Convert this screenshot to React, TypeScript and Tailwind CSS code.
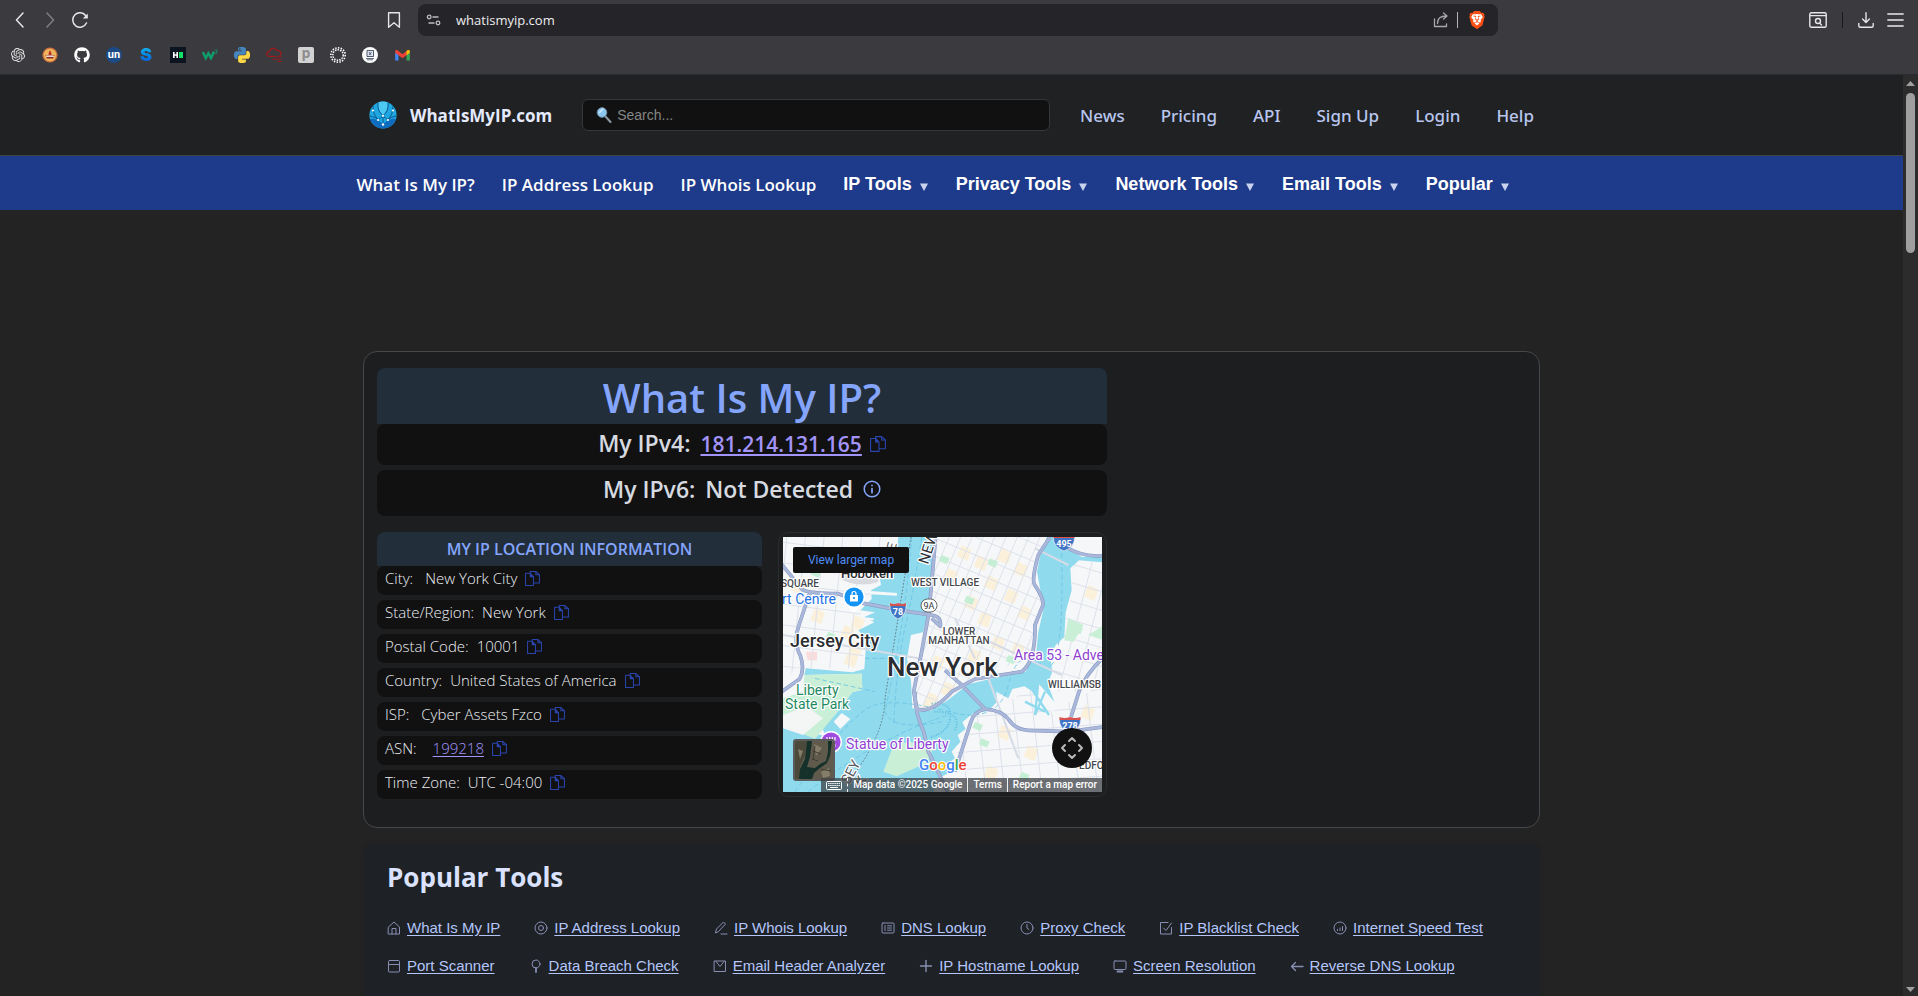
import React from "react";
import { FaGithub } from "react-icons/fa";
import { SiOpenai, SiBrave } from "react-icons/si";

type SvgProps = { className?: string; children?: React.ReactNode; box?: string };

function Line({ className = "", children, box = "0 0 16 16" }: SvgProps) {
  return (
    <svg viewBox={box} className={className} fill="none" stroke="currentColor" strokeLinecap="round" strokeLinejoin="round" aria-hidden="true">
      {children}
    </svg>
  );
}

/* ---------- browser chrome ---------- */

const pythonTop =
  "M14.25.18l.9.2.73.26.59.3.45.32.34.34.25.34.16.33.1.3.04.26.02.2-.01.13V8.5l-.05.63-.13.55-.21.46-.26.38-.3.31-.33.25-.35.19-.35.14-.33.1-.3.07-.26.04-.21.02H8.77l-.69.05-.59.14-.5.22-.41.27-.33.32-.27.35-.2.36-.15.37-.1.35-.07.32-.04.27-.02.21v3.06H3.17l-.21-.03-.28-.07-.32-.12-.35-.18-.36-.26-.36-.36-.35-.46-.32-.59-.28-.73-.21-.88-.14-1.05-.05-1.23.06-1.22.16-1.04.24-.87.32-.71.36-.57.4-.44.42-.33.42-.24.4-.16.36-.1.32-.05.24-.01h.16l.06.01h8.16v-.83H6.18l-.01-2.75-.02-.37.05-.34.11-.31.17-.28.25-.26.31-.23.38-.2.44-.18.51-.15.58-.12.64-.1.71-.06.77-.04.84-.02 1.27.05zm-6.3 1.98l-.23.33-.08.41.08.41.23.34.33.22.41.09.41-.09.33-.22.23-.34.08-.41-.08-.41-.23-.33-.33-.22-.41-.09-.41.09z";
const pythonBottom =
  "M21.04 6.11l.28.06.32.12.35.18.36.27.36.35.35.47.32.59.28.73.21.88.14 1.04.05 1.23-.06 1.23-.16 1.04-.24.86-.32.71-.36.57-.4.45-.42.33-.42.24-.4.16-.36.09-.32.05-.24.02-.16-.01h-8.22v.82h5.84l.01 2.76.02.36-.05.34-.11.31-.17.29-.25.25-.31.24-.38.2-.44.17-.51.15-.58.13-.64.09-.71.07-.77.04-.84.01-1.27-.04-1.07-.14-.9-.2-.73-.25-.59-.3-.45-.33-.34-.34-.25-.34-.16-.33-.1-.3-.04-.25-.02-.2.01-.13v-5.34l.05-.64.13-.54.21-.46.26-.38.3-.32.33-.24.35-.2.35-.14.33-.1.3-.06.26-.04.21-.02.13-.01h5.84l.69-.05.59-.14.5-.21.41-.28.33-.32.27-.35.2-.36.15-.36.1-.35.07-.32.04-.28.02-.21V6.07h2.09l.14.01z";

const bookmarks: { name: string; icon: React.ReactNode }[] = [
  { name: "ChatGPT", icon: <SiOpenai className="size-[14px] text-[#e4e4e4]" /> },
  {
    name: "Temple",
    icon: (
      <svg viewBox="0 0 16 16" className="size-4">
        <circle cx="8" cy="8" r="7.6" fill="#c9703c" />
        <circle cx="8" cy="8" r="6.3" fill="#efb45c" />
        <path d="M3.2 8.2h9.600l-1.800 3.400H5z" fill="#8a2a23" />
        <path d="M8 3l1.400 3v2H6.600V6z" fill="#b5322b" />
        <path d="M4 9.200h8" stroke="#fff" strokeWidth="1.200" />
      </svg>
    ),
  },
  { name: "GitHub", icon: <FaGithub className="size-4 text-white" /> },
  {
    name: "UN",
    icon: (
      <span className="flex size-4 items-center justify-center rounded-full bg-[#1c4a86] pb-px font-['Roboto',sans-serif] text-[11px] leading-none font-bold text-white">
        un
      </span>
    ),
  },
  {
    name: "S",
    icon: (
      <span className="bg-gradient-to-b from-[#19b4f0] to-[#1257d8] bg-clip-text font-['Inter',sans-serif] text-[18px] leading-4 font-black text-transparent">S</span>
    ),
  },
  {
    name: "HackerRank",
    icon: (
      <svg viewBox="0 0 16 16" className="size-4">
        <rect width="16" height="16" fill="#0c1420" />
        <path d="M3.800 5v6M7.200 5v6M3.800 8h3.400" stroke="#fff" strokeWidth="1.600" fill="none" />
        <rect x="9" y="5" width="4" height="6" fill="#12e068" />
      </svg>
    ),
  },
  {
    name: "W3Schools",
    icon: (
      <svg viewBox="0 0 16 16" className="size-4" fill="none" stroke="#0f9d6a">
        <path d="M.8 5l3 6L6.400 6.400 9 11l3-6.400" strokeWidth="2.500" />
        <path d="M13 3h2.200L14 4.600q1.600.2 1 1.400t-2 .3" strokeWidth=".8" />
      </svg>
    ),
  },
  {
    name: "Python",
    icon: (
      <svg viewBox="0 0 24 24" className="size-4">
        <path d={pythonTop} fill="#4685bd" />
        <path d={pythonBottom} fill="#ffd845" />
      </svg>
    ),
  },
  {
    name: "Cloud",
    icon: (
      <Line className="size-4 text-[#a31919]">
        <path d="M8.500 9.300H3.200a2.500 2.500 0 0 1 .3-5A4 4 0 0 1 11 3.800a2.800 2.800 0 0 1 3 4.600" strokeWidth="1.200" />
        <path d="M10 9.800h5M7 12.200h4M12.500 12.200h1.500M12 14.500h3.500" strokeWidth="1" />
      </Line>
    ),
  },
  {
    name: "P",
    icon: (
      <span className="flex size-4 items-center justify-center rounded-[2px] bg-[#d2d2d2] pb-1 font-['Open_Sans',sans-serif] text-[14px] leading-none font-bold text-[#8d8d8d]">p</span>
    ),
  },
  {
    name: "Ring",
    icon: (
      <svg viewBox="0 0 16 16" className="size-4" fill="none" stroke="#ffffff">
        <circle cx="8" cy="8" r="7.200" strokeDasharray="1.500 1.300" strokeWidth="1.600" />
        <circle cx="8" cy="8" r="5.200" strokeDasharray="1.500 1.100" strokeWidth="1.500" />
      </svg>
    ),
  },
  {
    name: "Computer",
    icon: (
      <svg viewBox="0 0 16 16" className="size-4">
        <circle cx="8" cy="8" r="8" fill="#fbfbfb" />
        <path d="M5 3.500h6.500v6H5z" fill="#dfe6ef" stroke="#24324a" strokeWidth=".8" />
        <path d="M7 5l2 3M9.500 5L7 8M4 11.500h8M5 12.800h6" stroke="#24324a" strokeWidth=".7" />
      </svg>
    ),
  },
  {
    name: "Gmail",
    icon: (
      <svg viewBox="0 0 16 12" className="h-[11px] w-[15px]">
        <path d="M0 2v9.500h3.600V4.500z" fill="#4285f4" />
        <path d="M16 2v9.500h-3.600V4.500z" fill="#34a853" />
        <path d="M0 3V1.600A1.500 1.500 0 0 1 2.600.4L8 4.500 13.400.4v4.500L8 9 0 3z" fill="#ea4335" />
        <path d="M12.400 1.200V5.600L16 3V1.600A1.500 1.500 0 0 0 13.400.4z" fill="#fbbc04" />
      </svg>
    ),
  },
];

function BrowserChrome() {
  return (
    <div className="shrink-0 border-b border-[#2c2b2f] bg-[#3b3a3f] text-[#e6e6e8]">
      <div className="flex h-10 items-center">
        <div className="flex flex-1 items-center pl-3">
          <button aria-label="Back" className="flex size-4 items-center justify-center">
            <Line className="size-4"><path d="M11 1L4.500 8l6.500 7" strokeWidth="1.5" /></Line>
          </button>
          <button aria-label="Forward" className="ml-[14px] flex size-4 items-center justify-center text-[#7f7e83]">
            <Line className="size-4"><path d="M5 1l6.500 7L5 15" strokeWidth="1.5" /></Line>
          </button>
          <button aria-label="Reload" className="ml-[14px] flex size-4 items-center justify-center">
            <svg viewBox="0 0 16 16" className="size-4" fill="none" stroke="currentColor" strokeWidth="1.5" aria-hidden="true">
              <path d="M14.500 11A7.200 7.200 0 1 1 14 4" strokeLinecap="round" />
              <path d="M15.800 1.500v5h-5z" fill="currentColor" stroke="none" />
            </svg>
          </button>
          <button aria-label="Bookmark this page" className="mr-4 ml-auto">
            <Line className="size-4"><path d="M2.600 .8h10.800v14.400L8 10.700l-5.400 4.500z" strokeWidth="1.400" /></Line>
          </button>
        </div>
        <div className="flex h-8 w-[1080px] items-center rounded-lg bg-[#252429] px-2">
          <Line className="size-4 text-[#bfbfc2]">
            <circle cx="3.200" cy="5" r="1.800" strokeWidth="1.300" />
            <circle cx="12" cy="11" r="1.800" strokeWidth="1.300" />
            <path d="M7 5h5M3 11h5" strokeWidth="1.400" />
          </Line>
          <input aria-label="Address" defaultValue="whatismyip.com" className="ml-[14px] min-w-0 flex-1 bg-transparent pt-px font-['Open_Sans',sans-serif] text-[13px] text-[#ededee] outline-none" />
          <button aria-label="Share">
            <Line className="size-4 text-[#a9a9ac]">
              <path d="M1.500 7v7.500h12V12M4.500 11.500c0-5 3-7.500 9-7.500M10.500 1l3.500 3-3.500 3" strokeWidth="1.300" />
            </Line>
          </button>
          <span className="mx-2 h-4 w-px bg-[#b5b5b8]" />
          <button aria-label="Brave Shields" className="mr-1 ml-[2px]">
            <svg viewBox="0 0 24 24" className="size-[18px]" aria-hidden="true">
              <path d="M6 4h12l2 4-2 9-6 5-6-5L4 8z" fill="#fff" />
              <SiBrave size={24} color="#fb4f14" />
            </svg>
          </button>
        </div>
        <div className="flex flex-1 items-center justify-end pr-[14px]">
          <button aria-label="Search tabs">
            <Line className="h-4 w-[18px]" box="0 0 18 16">
              <rect x=".8" y=".8" width="16.400" height="14.400" rx="1.500" strokeWidth="1.400" />
              <path d="M1 3.600h16M11 11.500l1.500 1.400" strokeWidth="1.400" />
              <circle cx="9" cy="9" r="2.500" strokeWidth="1.400" />
            </Line>
          </button>
          <span className="mx-[15px] h-4 w-px bg-[#19191b]" />
          <button aria-label="Downloads">
            <Line className="size-4"><path d="M8 .8v9.500M4.600 7L8 10.400 11.400 7M.8 11.500v2.200q0 1.500 1.500 1.500h11.400q1.500 0 1.500-1.500v-2.200" strokeWidth="1.400" /></Line>
          </button>
          <button aria-label="Menu" className="ml-[13px] text-[#bdbdbf]">
            <Line className="h-4 w-[17px]" box="0 0 17 16"><path d="M1 2h15M1 8h15M1 14h15" strokeWidth="1.800" /></Line>
          </button>
        </div>
      </div>
      <div className="flex h-[34px] items-start gap-4 px-[10px] pt-[7px]">
        {bookmarks.map((b) => (
          <a key={b.name} href="#" aria-label={b.name} className="flex size-4 items-center justify-center">
            {b.icon}
          </a>
        ))}
      </div>
    </div>
  );
}

/* ---------- site header ---------- */

function Logo() {
  return (
    <svg viewBox="0 0 28 28" className="size-7" aria-hidden="true">
      <circle cx="14" cy="14" r="13.600" fill="#1ea7e0" />
      <path d="M1 18q6-1 13 5 7-6 13-5-3 9-13 9.600Q4 27 1 18z" fill="#0f6bbd" />
      <path d="M9 1.500Q14-.5 19 1.500 19 10 14 14 9 10 9 1.500z" fill="#4cc9f2" />
      <path d="M9 1.500q-1 9 5 13 6-4 5-13M4 5q0 9 5 13M24 5q0 9-5 13M14 14v9M9 19l5-4 5 4M1 15q6 1 8 4M27 15q-6 1-8 4" fill="none" stroke="#0b4f88" strokeWidth=".9" />
      <g fill="#fff">
        <circle cx="4" cy="9.500" r="1.100" /><circle cx="24" cy="9.500" r="1.100" /><circle cx="14" cy="14.800" r="1.100" />
        <circle cx="9" cy="19" r="1.100" /><circle cx="19" cy="19" r="1.100" /><circle cx="14" cy="23.500" r="1.200" />
      </g>
    </svg>
  );
}

const topLinks = ["News", "Pricing", "API", "Sign Up", "Login", "Help"];
const plainTabs = ["What Is My IP?", "IP Address Lookup", "IP Whois Lookup"];
const menuTabs = ["IP Tools", "Privacy Tools", "Network Tools", "Email Tools", "Popular"];

function SiteHeader() {
  return (
    <header>
      <div className="border-b border-[#414346] bg-[#202122]">
        <div className="mx-auto flex h-20 max-w-[1165px] items-center">
          <a href="#" className="flex items-center gap-[13px] font-['Open_Sans',sans-serif] text-[17px] font-bold text-[#e4eafc]">
            <Logo />
            <span className="pt-px">WhatIsMyIP.com</span>
          </a>
          <label className="mx-[30px] flex h-8 flex-1 items-center gap-1 rounded-md border border-[#35373a] bg-[#111111] pl-3">
            <svg viewBox="0 0 18 18" className="size-[18px]" aria-hidden="true">
              <path d="M10 10l5.500 6" stroke="#15181b" strokeWidth="3.600" strokeLinecap="round" />
              <path d="M10.500 10.500l5 5.500" stroke="#8d979f" strokeWidth="2" strokeLinecap="round" />
              <circle cx="7" cy="6.500" r="4.800" fill="#8cc7f2" stroke="#6f8ea6" strokeWidth="1" />
              <path d="M4.500 6.500l3.500-3.500" stroke="#d5ecfb" strokeWidth="1.400" strokeLinecap="round" />
            </svg>
            <input type="text" aria-label="Search" placeholder="Search..." className="min-w-0 flex-1 bg-transparent font-['Liberation_Sans',Arial,sans-serif] text-[14px] text-gray-200 outline-none placeholder:text-[#858585]" />
          </label>
          <nav className="flex gap-9 pt-px font-['Noto_Sans',sans-serif] text-[17px] font-medium text-[#b9c6ee]">
            {topLinks.map((t) => (
              <a key={t} href="#">{t}</a>
            ))}
          </nav>
        </div>
      </div>
      <nav className="bg-[#1e3a8a] text-white">
        <div className="mx-auto flex h-[54px] max-w-[1190px] items-center gap-[27px] pt-[3px]">
          {plainTabs.map((t) => (
            <a key={t} href="#" className="font-['Open_Sans',sans-serif] text-[17px] font-semibold whitespace-nowrap">{t}</a>
          ))}
          <div className="flex items-center gap-7">
            {menuTabs.map((t) => (
              <button key={t} className="flex items-center gap-2 font-['Liberation_Sans',Arial,sans-serif] text-[18px] font-bold whitespace-nowrap">
                {t}
                <svg viewBox="0 0 8 8" className="mt-1 size-2" aria-hidden="true"><path d="M0 .5h8L4 8z" fill="#c9d3ee" /></svg>
              </button>
            ))}
          </div>
        </div>
      </nav>
    </header>
  );
}

/* ---------- ip card ---------- */

function CopyIcon({ className }: { className: string }) {
  return (
    <svg viewBox="0 0 16 16" className={className} fill="none" stroke="#2b45ae" strokeWidth="1.100" strokeLinejoin="round" aria-hidden="true">
      <path d="M.6 2.500h5L9 6v9.400H.6z" />
      <path d="M5.600 2.500V6H9" fill="#2b45ae" />
      <path d="M5.600 2V.6h6L15.400 4v8.800H9" />
      <path d="M11.600.6V4h3.800" />
    </svg>
  );
}

const facts: { label: string; value: string; gap: string; link?: boolean }[] = [
  { label: "City:", value: "New York City", gap: "gap-3" },
  { label: "State/Region:", value: "New York", gap: "gap-2" },
  { label: "Postal Code:", value: "10001", gap: "gap-2" },
  { label: "Country:", value: "United States of America", gap: "gap-2" },
  { label: "ISP:", value: "Cyber Assets Fzco", gap: "gap-3" },
  { label: "ASN:", value: "199218", gap: "gap-4", link: true },
  { label: "Time Zone:", value: "UTC -04:00", gap: "gap-2" },
];

const water =
  "M370 36L366 84 312 146 318 180 288 196 290 222 256 256 300 262 268 276 298 292 250 316 268 336 272 376 268 432 232 442 92 430 88 450 260 446 262 494 232 502 180 570 140 604 152 634 20 600 20 810 474 810 488 762 520 744 512 722 540 700 530 680 556 650 548 630 572 612 562 592 592 566 640 558 666 530 664 500 700 520 712 492 748 484 790 510 786 470 812 500 838 530 818 476 832 440 826 396 842 360 868 336 872 262 890 196 886 130 912 106 981 112 981 92 920 96 866 60 850 30 818 30 796 90 786 140 806 250 790 320 784 380 752 440 660 458 580 478 520 524 470 556 430 560 412 548 408 470 396 400 408 330 444 322 462 250 470 150 476 36z";

const highways = [
  "M482 36L472 150 462 262 440 380 416 500 426 552Q470 566 530 500L600 462 740 440Q782 410 780 300L804 240Q806 218 778 178 770 160 790 90L825 36",
  "M20 118L82 194Q104 206 190 206L270 236 400 260 470 270Q500 274 496 304L470 280",
  "M112 204Q100 200 92 240L72 300Q54 350 76 392 90 432 74 462L20 500",
  "M510 436L560 480 630 552Q680 556 700 582 720 614 760 616L880 620 986 606",
  "M630 552Q596 560 588 590L556 690 540 740",
  "M420 500Q418 560 446 620L460 680 494 750 520 806",
  "M986 396Q930 450 912 500L888 576",
  "M850 40L870 64Q920 98 986 92",
];

function lines(n: number, f: (i: number) => string) {
  return Array.from({ length: n }, (_, i) => f(i)).join("");
}

const manhattanStreets =
  lines(12, (i) => `M${530 + i * 34} 20L${300 + i * 34} 560`) + lines(13, (i) => `M380 ${i * 54 - 110}l480 200`);
const jerseyStreets = lines(7, (i) => `M${-20 + i * 56} 30l-50 500`) + lines(7, (i) => `M10 ${i * 62 + 50}l320 40`);
const brooklynStreets = lines(11, (i) => `M${540 + i * 56} 480l40 340`) + lines(8, (i) => `M480 ${i * 52 + 480}l520-40`);
const queensStreets = lines(6, (i) => `M${800 + i * 50} 500l110-420`) + lines(7, (i) => `M800 ${i * 56 + 90}l200 60`);

const sandBlocks: [number, number][] = [
  [560, 60], [610, 90], [680, 70], [730, 110], [520, 130], [640, 150], [580, 210], [700, 190], [740, 240], [620, 260],
  [540, 300], [660, 330], [590, 370], [720, 350], [480, 390], [510, 470], [460, 500], [200, 80], [240, 270], [120, 250],
  [220, 380], [680, 600], [760, 660], [880, 680], [640, 720], [930, 540], [940, 180], [60, 160], [235, 345], [210, 300], [450, 530],
];
const parkBlocks: [number, number][] = [
  [500, 90], [575, 212], [645, 100], [700, 390], [860, 700], [620, 640], [900, 300], [160, 320], [600, 590], [115, 130], [740, 740],
];

function Shield({ x, y, label }: { x: number; y: number; label: string }) {
  const w = label.length * 2.5 + 3;
  return (
    <g>
      <path d={`M${x - w} ${y - 6}q${w} 3 ${2 * w} 0Q${x + w + 1} ${y + 5} ${x} ${y + 9} ${x - w - 1} ${y + 5} ${x - w} ${y - 6}z`} fill="#3f74c4" stroke="#fff" strokeWidth=".6" />
      <path d={`M${x - w} ${y - 7}q${w / 2} 2 ${w} 0 ${w / 2} 2 ${w} 0v3H${x - w}z`} fill="#d9534f" />
      <text x={x} y={y + 5} textAnchor="middle" fontSize="9" fontWeight="700" fill="#fff">{label}</text>
    </g>
  );
}

function MapDrawing() {
  return (
    <svg viewBox="0 0 319 255" className="block h-full w-full" preserveAspectRatio="xMidYMid slice" fontFamily="Roboto, sans-serif" role="img" aria-label="Map of New York">
      <defs>
        <clipPath id="land-nj"><path d="M0 0H360L310 160 256 260 268 430 60 430 0 520z" /></clipPath>
        <clipPath id="land-mn"><path d="M482 30H815L780 160 800 240 770 400 590 460 470 555 420 545 430 420z" /></clipPath>
        <clipPath id="land-bk"><path d="M660 560L760 490 830 560 981 480V810H480L540 700 590 570z" /></clipPath>
        <clipPath id="land-qn"><path d="M981 110L900 110 880 260 840 370 830 500 981 500z" /></clipPath>
      </defs>
      <rect width="319" height="255" fill="#f6f7f9" />
      <g transform="scale(.33333) translate(-24 -36)">
        <g fill="#fbf0d9">
          {sandBlocks.map(([x, y]) => (
            <path key={`${x}-${y}`} d={`M${x} ${y}l30 14-12 34-32-14z`} />
          ))}
        </g>
        <path d="M92 380h34v26H98z" fill="#fbdcdc" />
        <g stroke="#dde1ea" strokeWidth="3" fill="none">
          <path d={jerseyStreets} clipPath="url(#land-nj)" />
          <path d={manhattanStreets} clipPath="url(#land-mn)" />
          <path d={brooklynStreets} clipPath="url(#land-bk)" />
          <path d={queensStreets} clipPath="url(#land-qn)" />
        </g>
        <g fill="#c5efd4">
          {parkBlocks.map(([x, y]) => (
            <path key={`${x}-${y}`} d={`M${x} ${y}l24 10-8 18-24-10z`} />
          ))}
        </g>
        <path d={water} fill="#90daee" />
        <g fill="#f6f7f9">
          <path d="M286 198l80 6v8l-80-4zM262 276l34 4v6l-34-2zM240 332l30 6-4 10-28-4z" />
          <path d="M408 330l36 4v8l-36-4zM404 360l32 4v8l-32-4z" />
        </g>
        <path d="M88 450l172-4 2 48-30 8-52 68-60 72-96-40V520l60-20z" fill="#c9f0d6" />
        <path d="M24 570l70-26 50 36-60 50-60-20z" fill="#f3f6f5" />
        <path d="M176 590l24-26 26 18-30 30z" fill="#f6f7f9" />
        <path d="M325 740l30-78 50-12 70 20-20 44-90 40z" fill="#c9f0d6" />
        <path d="M880 280l46 20-30 50-28-4zM940 330l41-26v40z" fill="#c9f0d6" />
        <g stroke="#69c3e2" strokeWidth="2.500" fill="none" strokeDasharray="14 8">
          <path d="M410 36Q396 200 380 300T330 560Q350 620 500 590" />
          <path d="M440 36Q420 180 392 300T356 600" />
          <path d="M60 800Q230 560 300 540T520 560 700 480 800 420 860 60" />
          <path d="M270 400h100M120 460L300 500M100 800Q300 640 520 570" />
        </g>
        <path d="M470 536q60-6 56 40t-60 60M478 560q90 0 60 60" stroke="#5dbfe0" strokeWidth="6" strokeDasharray="3 5" fill="none" />
        <path d="M408 36L366 300 330 520Q330 600 270 700L230 760" stroke="#546a78" strokeWidth="2.500" strokeDasharray="5 5" fill="none" />
        <path d="M540 280L600 400M600 330L860 450M640 460L730 700M780 70L880 120M24 330L430 400" stroke="#d6dbe6" strokeWidth="6" fill="none" />
        <g fill="none" strokeLinejoin="round">
          {highways.map((d) => <path key={d} d={d} stroke="#8797c0" strokeWidth="11" />)}
          {highways.map((d) => <path key={d} d={d} stroke="#a9b7da" strokeWidth="8" />)}
        </g>
        <path d="M200 150h110v20q-50 20-110-6z" fill="#d8dae0" />
        <path d="M762 480l60 90M790 470l-10 100M810 500l-30 70M750 530l60 30" stroke="#90daee" strokeWidth="7" />
      </g>
      <g stroke="#fff" strokeWidth="2.400" paintOrder="stroke" strokeLinejoin="round" fill="#2b2d31">
        <g fontSize="10" fontWeight="500" fill="#44474c">
          <text x="-2" y="50">SQUARE</text>
          <text x="128" y="49">WEST VILLAGE</text>
          <text x="176" y="98" textAnchor="middle">LOWER</text>
          <text x="176" y="107" textAnchor="middle">MANHATTAN</text>
          <text x="265" y="151">WILLIAMSB</text>
          <text x="296" y="232">EDFO</text>
        </g>
        <text x="58" y="41" fontSize="13" fontWeight="500">Hoboken</text>
        <text x="7" y="110" fontSize="18" fontWeight="500">Jersey City</text>
        <text x="104" y="139" fontSize="26" fontWeight="500">New York</text>
        <text x="-1" y="67" fontSize="14" fill="#1f74e8">rt Centre</text>
        <text x="13" y="158" fontSize="14" fill="#1e8a5f">Liberty</text>
        <text x="2" y="172" fontSize="14" fill="#1e8a5f">State Park</text>
        <text x="231" y="123" fontSize="14" fill="#8d3fd1">Area 53 - Adve</text>
        <text x="63" y="212" fontSize="14" fill="#8d3fd1">Statue of Liberty</text>
        <text x="112" y="14" fontSize="13" fill="#55585e" transform="rotate(-74 112 14)">E</text>
        <text x="145" y="28" fontSize="15" transform="rotate(-72 145 28)">NEW</text>
        <text x="66" y="248" fontSize="14" fill="#55585e" transform="rotate(-62 66 248)">SEY</text>
        <text x="80" y="250" fontSize="14" fill="#55585e" transform="rotate(-62 80 250)">K</text>
      </g>
      <g>
        <circle cx="71" cy="60" r="11" fill="#fff" />
        <path d="M63 67l8 9 8-9z" fill="#fff" />
        <circle cx="71" cy="60" r="9.600" fill="#1394f5" />
        <path d="M67 58h8v6.500h-8z" fill="#fff" />
        <path d="M69 58v-1.500a2 2 0 0 1 4 0V58" fill="none" stroke="#fff" strokeWidth="1.200" />
        <circle cx="71" cy="61" r="1.100" fill="#1394f5" />
      </g>
      <g>
        <circle cx="48" cy="205" r="11" fill="#fff" />
        <circle cx="48" cy="205" r="9.600" fill="#a04be0" />
        <path d="M44 200v3h8v-3M46.700 200v3M49.300 200v3M45 204h6l1 5h-8z" stroke="#fff" strokeWidth="1.200" fill="none" />
      </g>
      <rect x="138" y="62" width="16" height="13" rx="6.500" fill="#fff" stroke="#444" strokeWidth=".8" />
      <text x="146" y="72" textAnchor="middle" fontSize="9" fill="#333">9A</text>
      <Shield x={115} y={73} label="78" />
      <Shield x={281} y={5} label="495" />
      <Shield x={287} y={187} label="278" />
      <text x="136" y="233" fontSize="15" fontWeight="500" stroke="#fff" strokeWidth="2" paintOrder="stroke">
        <tspan fill="#4285f4">G</tspan><tspan fill="#ea4335">o</tspan><tspan fill="#fbbc04">o</tspan><tspan fill="#4285f4">g</tspan><tspan fill="#34a853">l</tspan><tspan fill="#ea4335">e</tspan>
      </text>
    </svg>
  );
}

function MapPanel() {
  return (
    <div className="h-[265px] flex-1 rounded-[10px] border border-[#2b2c2f] p-1">
      <div className="relative h-full overflow-hidden">
        <MapDrawing />
        <a href="#" className="absolute top-[10px] left-[10px] flex h-[26px] w-[116px] items-center justify-center rounded-[2px] bg-[#111111] font-['Roboto',sans-serif] text-[12px] text-[#4f8df5]">
          View larger map
        </a>
        <button aria-label="Satellite view" className="absolute bottom-[11px] left-[10px] size-[42px] overflow-hidden rounded-[3px] border-2 border-[#5b5b5b]">
          <svg viewBox="0 0 38 38" className="size-full" aria-hidden="true">
            <rect width="38" height="38" fill="#5f5a4b" />
            <path d="M0 0h12l-2 14L5 26v12H0z" fill="#4b4a3a" />
            <path d="M12 0h5l-2 16-3 10 8 1 5-4 6-3 2-9V0h4l-2 15-3 7-7 5-6 5-2 6H4l1-10 5-10z" fill="#16302a" />
            <path d="M19 3l8 4-6 8zM26 31l8-4 1 8-7 2zM3 8l5 2-3 8z" fill="#857d69" />
            <path d="M18 10l8 3M17 18l6 2M26 28l10 2M20 5l-2 14" stroke="#3f3c30" strokeWidth="1" />
          </svg>
        </button>
        <button aria-label="Map camera controls" className="absolute right-[10px] bottom-6 flex size-10 items-center justify-center rounded-full bg-[#111111] text-[#b9b9b9]">
          <Line className="size-6" box="0 0 24 24">
            <path d="M9 5l3-3 3 3M9 19l3 3 3-3M5 9l-3 3 3 3M19 9l3 3-3 3" strokeWidth="2" />
          </Line>
        </button>
        <div className="absolute right-0 bottom-0 flex h-[14px] items-center bg-[#3e4145]/75 font-['Roboto',sans-serif] text-[10px] leading-none font-medium whitespace-nowrap text-white">
          <button aria-label="Keyboard shortcuts" className="px-[5px]">
            <Line className="h-[9px] w-4" box="0 0 16 9">
              <rect x=".5" y=".5" width="15" height="8" rx="1" strokeWidth="1" />
              <path d="M2.500 2.500h11M2.500 4.500h11" strokeWidth="1" strokeDasharray=".6 1.500" />
              <path d="M4.500 6.500h7" strokeWidth="1" />
            </Line>
          </button>
          <span className="flex h-full items-center border-l border-dashed border-white/90 px-[5px]">Map data ©2025 Google</span>
          <a href="#" className="flex h-full items-center border-l border-white/90 px-[5px]">Terms</a>
          <a href="#" className="flex h-full items-center border-l border-white/90 px-[5px]">Report a map error</a>
        </div>
      </div>
    </div>
  );
}

function IpCard() {
  return (
    <section className="rounded-[14px] border border-[#45474a] bg-[#1d1e20] px-[13px] pt-4 pb-7 font-['Open_Sans',sans-serif]">
      <div className="w-[730px]">
        <h1 className="flex h-14 items-center justify-center rounded-t-lg bg-[#232e3b] pt-[3px] text-[40px] leading-none font-semibold text-[#84a5fb]">What Is My IP?</h1>
        <div className="flex h-[41px] items-center justify-center gap-2 rounded-lg bg-[#111111] pb-[2px] text-[#d6dae0]">
          <span className="flex items-baseline gap-[10px] font-semibold">
            <span className="text-[23px] leading-8">My IPv4:</span>
            <a href="#" className="text-[21px] leading-8 text-[#a394fb] underline decoration-2 underline-offset-2">181.214.131.165</a>
          </span>
          <button aria-label="Copy IPv4"><CopyIcon className="size-4" /></button>
        </div>
        <div className="mt-[5px] flex h-[46px] items-center justify-center gap-[10px] rounded-lg bg-[#111111] pb-2 text-[23px] leading-8 font-semibold text-[#d6dae0]">
          <span>My IPv6:</span>
          <span>Not Detected</span>
          <button aria-label="About IPv6" className="text-[#84a5fb]">
            <Line className="size-[18px]" box="0 0 18 18">
              <circle cx="9" cy="9" r="7.800" strokeWidth="1.500" />
              <path d="M9 8.500v4.200M9 5.400v.2" strokeWidth="1.700" />
            </Line>
          </button>
        </div>
        <div className="mt-4 flex items-start gap-4">
          <div className="w-[385px]">
            <h2 className="flex h-[34px] items-center justify-center rounded-t-lg bg-[#232e3b] text-[16px] font-semibold text-[#84a5fb]">MY IP LOCATION INFORMATION</h2>
            <ul className="flex flex-col gap-[5px]">
              {facts.map((f) => (
                <li key={f.label} className="flex h-[29px] items-center rounded-lg bg-[#111111] pb-1 pl-2 text-[15px] font-light text-[#eef0f4]">
                  <span className={`flex ${f.gap}`}>
                    <span>{f.label}</span>
                    {f.link ? <a href="#" className="text-[#a394fb] underline underline-offset-2">{f.value}</a> : <span>{f.value}</span>}
                  </span>
                  <button aria-label={`Copy ${f.value}`} className="ml-2"><CopyIcon className="size-[15px]" /></button>
                </li>
              ))}
            </ul>
          </div>
          <MapPanel />
        </div>
      </div>
    </section>
  );
}

/* ---------- popular tools ---------- */

const toolRows: { name: string; icon: React.ReactNode }[][] = [
  [
    { name: "What Is My IP", icon: <path d="M1.500 6L7 1l5.500 5v7h-11zM5 13V7.500h4V13" /> },
    { name: "IP Address Lookup", icon: <><circle cx="7" cy="7" r="6" /><circle cx="7" cy="7" r="2.500" /></> },
    { name: "IP Whois Lookup", icon: <path d="M1.500 11.500l1-3.500L9.500 1l2 2-7 7.500zM7 13h6" /> },
    { name: "DNS Lookup", icon: <><rect x="1" y="2" width="12" height="10" rx="1" /><path d="M6.500 4.800h4M6.500 7h4M6.500 9.200h4M4 4.500v5" /></> },
    { name: "Proxy Check", icon: <><circle cx="7" cy="7" r="6" /><path d="M7 3.500V7l2 1.500" /></> },
    { name: "IP Blacklist Check", icon: <path d="M9 1.500H1.500V13h11V6.500M4.500 7l2.500 2.500 5.500-7.500" /> },
    { name: "Internet Speed Test", icon: <><circle cx="7" cy="7" r="6" /><path d="M4.500 9.500V8.500M7 9.500V7M9.500 9.500V5.500" /></> },
  ],
  [
    { name: "Port Scanner", icon: <><rect x="1.500" y="1.500" width="11" height="11.500" rx="1" /><path d="M1.500 5.500h11" /></> },
    { name: "Data Breach Check", icon: <><circle cx="7" cy="5" r="4" /><path d="M7 9v4" strokeWidth="1.800" /></> },
    { name: "Email Header Analyzer", icon: <path d="M1.500 2h11v10.500h-11zM3 2.500l4 5 4-5" /> },
    { name: "IP Hostname Lookup", icon: <path d="M7 1.500v11M1.500 7h11" strokeWidth="1.400" /> },
    { name: "Screen Resolution", icon: <><rect x="1" y="2" width="12" height="8.500" rx="1" /><path d="M4.500 12.500h5" strokeWidth="1.800" /></> },
    { name: "Reverse DNS Lookup", icon: <path d="M13 7.500H1.500M5.500 3.500l-4 4 4 4" strokeWidth="1.300" /> },
  ],
];

function PopularTools() {
  return (
    <section className="mt-4 flex-1 rounded-t-lg bg-[#1e2125] px-6 pt-3 shadow-[0_0_4px_rgba(0,0,0,0.12)]">
      <h2 className="font-['Open_Sans',sans-serif] text-[26px] leading-[42px] font-bold text-[#dbe2fd]">Popular Tools</h2>
      <div className="mt-[18px] flex flex-col gap-[14px]">
        {toolRows.map((row, i) => (
          <ul key={i} className="flex gap-[34px]">
            {row.map((t) => (
              <li key={t.name} className="flex items-center gap-[6px]">
                <Line className="size-[14px] text-[#8790b4]" box="0 0 14 14">{t.icon}</Line>
                <a href="#" className="font-['Liberation_Sans',Arial,sans-serif] text-[15px] leading-6 whitespace-nowrap text-[#b4c6fb] underline underline-offset-2">{t.name}</a>
              </li>
            ))}
          </ul>
        ))}
      </div>
    </section>
  );
}

function ScrollBar() {
  return (
    <div className="flex w-[15px] shrink-0 flex-col items-center bg-[#2c2c2c]" aria-hidden="true">
      <svg viewBox="0 0 9 5" className="mt-[6px] h-[5px] w-[9px]"><path d="M4.500 0L9 5H0z" fill="#9f9f9f" /></svg>
      <div className="mt-[7px] h-40 w-[9px] rounded-full bg-[#9f9f9f]" />
      <svg viewBox="0 0 9 5" className="mt-auto mb-1 h-[5px] w-[9px]"><path d="M4.500 5L9 0H0z" fill="#9f9f9f" /></svg>
    </div>
  );
}

export default function App() {
  return (
    <div className="flex h-screen flex-col overflow-hidden bg-[#232323]">
      <BrowserChrome />
      <div className="flex min-h-0 flex-1">
        <div className="flex min-w-0 flex-1 flex-col overflow-hidden">
          <SiteHeader />
          <main className="mx-auto flex w-full max-w-[1177px] flex-1 flex-col pt-[141px]">
            <IpCard />
            <PopularTools />
          </main>
        </div>
        <ScrollBar />
      </div>
    </div>
  );
}
